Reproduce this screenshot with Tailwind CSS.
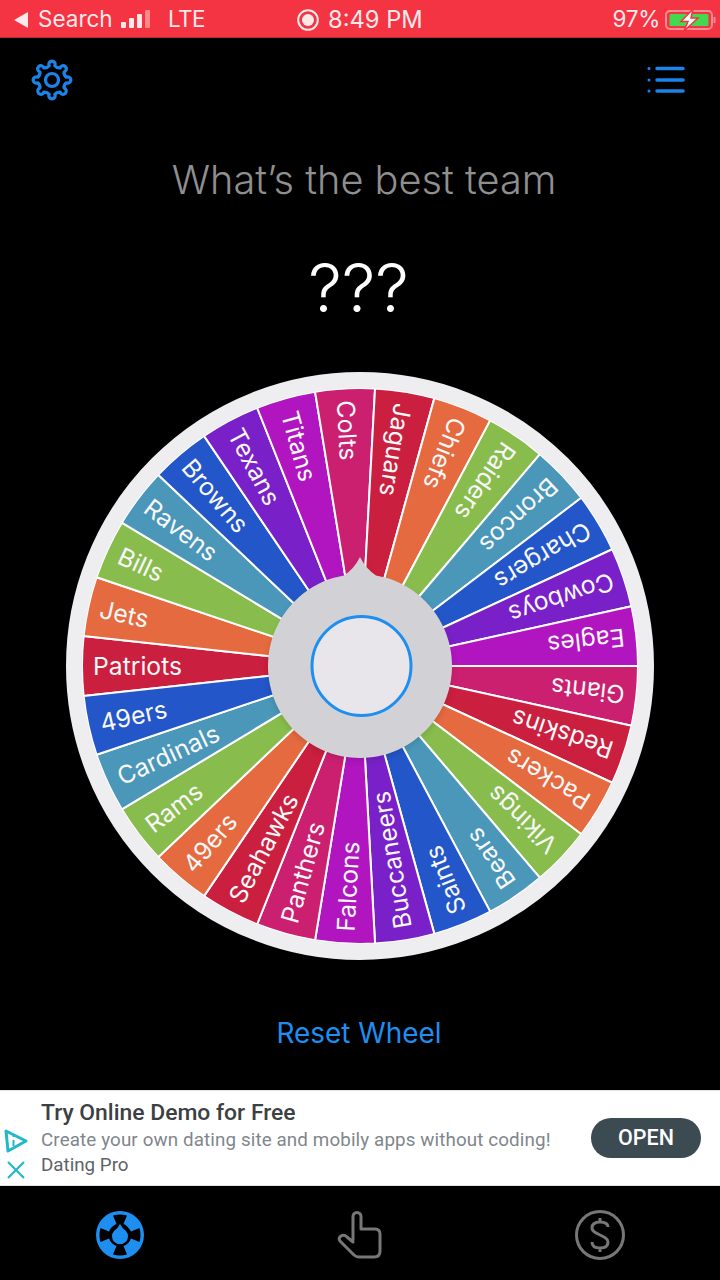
<!DOCTYPE html>
<html>
<head>
<meta charset="utf-8">
<script src="https://cdn.jsdelivr.net/npm/@tailwindcss/browser@4"></script>
</head>
<body class="bg-black">
<div class="w-[720px] h-[1280px] bg-black flex flex-col overflow-hidden font-['Inter',sans-serif]">

  <!-- status bar -->
  <div class="h-[38px] shrink-0 bg-[#f43343] border-b border-[#b92a38] relative flex items-center justify-between pt-[2px] text-[#fde9ea] text-[22.500px] leading-none">
    <div class="flex items-center pl-[14px]">
      <svg width="15" height="16" viewBox="0 0 15 16"><path d="M14 0V16L0 8Z" fill="#fde9ea"/></svg>
      <span class="ml-[9px] w-[83px]">Search</span>
      <svg width="30" height="20" viewBox="0 0 30 20"><rect x="0" y="12" width="5" height="6" rx="1" fill="#fde9ea"/><rect x="8" y="8" width="5" height="10" rx="1" fill="#fde9ea"/><rect x="16" y="4" width="5" height="14" rx="1" fill="#fde9ea"/><rect x="24" y="0" width="5" height="18" rx="1" fill="#f88"/></svg>
      <span class="ml-[17px] tracking-[-0.6px]">LTE</span>
    </div>
    <div class="absolute left-[297px] top-[8px] flex items-center gap-[9px]">
      <svg width="22" height="22" viewBox="0 0 22 22"><circle cx="11" cy="11" r="9.800" fill="none" stroke="#fde9ea" stroke-width="2"/><circle cx="11" cy="11" r="6" fill="#fde9ea"/></svg>
      <span class="text-[23.700px]">8:49 PM</span>
    </div>
    <div class="flex items-center pr-[3px]">
      <span class="tracking-[-0.3px]">97%</span>
      <svg class="ml-[5px]" width="52" height="22" viewBox="0 0 52 22">
        <rect x="1" y="2" width="46" height="18" rx="4" fill="none" stroke="#f98a92" stroke-width="2"/>
        <rect x="4.500" y="5" width="39" height="12" rx="1.500" fill="#43d84f"/>
        <path d="M49.500 8v6" stroke="#f98a92" stroke-width="2"/>
        <path d="M28 0L16 12.500H23L19 22L33 9H26Z" fill="#fff" stroke="#f43343" stroke-width="1.500"/>
      </svg>
    </div>
  </div>

  <!-- top icons -->
  <div class="h-[84px] shrink-0 flex items-center justify-between pl-[30px] pr-[34px]">
    <svg width="44" height="44" viewBox="-22 -22 44 44" fill="none" stroke="#1a84ea" stroke-width="3.200" stroke-linejoin="round">
      <path d="M14.220 -2.830A3.200 3.200 0 1 1 14.220 2.830A6 6 0 0 0 12.060 8.060A3.200 3.200 0 1 1 8.060 12.060A6 6 0 0 0 2.830 14.220A3.200 3.200 0 1 1 -2.830 14.220A6 6 0 0 0 -8.060 12.060A3.200 3.200 0 1 1 -12.060 8.060A6 6 0 0 0 -14.220 2.830A3.200 3.200 0 1 1 -14.220 -2.830A6 6 0 0 0 -12.060 -8.060A3.200 3.200 0 1 1 -8.060 -12.060A6 6 0 0 0 -2.830 -14.220A3.200 3.200 0 1 1 2.830 -14.220A6 6 0 0 0 8.060 -12.060A3.200 3.200 0 1 1 12.060 -8.060A6 6 0 0 0 14.220 -2.830Z"/>
      <circle r="6.500"/>
    </svg>
    <svg width="40" height="30" viewBox="0 0 40 30" stroke="#1a84ea" stroke-linecap="round">
      <path d="M11 3.500H37M11 15H37M11 26H37" stroke-width="3.500"/>
      <circle cx="3" cy="3.500" r="1.500" fill="#1a84ea" stroke="none"/><circle cx="3" cy="15" r="1.500" fill="#1a84ea" stroke="none"/><circle cx="3" cy="26" r="1.500" fill="#1a84ea" stroke="none"/>
    </svg>
  </div>

  <!-- question -->
  <div class="h-[116px] shrink-0 flex items-center justify-center pl-[8px] pt-[2px] text-[39.700px] font-light leading-none text-[#8f8f8f]">What’s the best team</div>
  <div class="h-[98px] shrink-0 flex items-center justify-center text-[67px] font-light leading-none text-white pr-[3px]">???</div>

  <!-- wheel -->
  <div class="h-[624px] shrink-0 pt-[36px]">
    <svg class="block mx-auto font-['Inter',sans-serif]" width="588" height="588" viewBox="-294 -294 588 588" font-size="24.700" fill="#f8f8f8">
      <g stroke="#fff" stroke-width="2" stroke-linejoin="round">
        <path transform="rotate(0)" fill="#cb1f3f" d="M0 0L-276.370 -30.060A278 278 0 0 0 -276.370 30.060Z"/>
        <path transform="rotate(12.414)" fill="#e66a40" d="M0 0L-276.370 -30.060A278 278 0 0 0 -276.370 30.060Z"/>
        <path transform="rotate(24.828)" fill="#88bd4e" d="M0 0L-276.370 -30.060A278 278 0 0 0 -276.370 30.060Z"/>
        <path transform="rotate(37.241)" fill="#4a97b9" d="M0 0L-276.370 -30.060A278 278 0 0 0 -276.370 30.060Z"/>
        <path transform="rotate(49.655)" fill="#2356c8" d="M0 0L-276.370 -30.060A278 278 0 0 0 -276.370 30.060Z"/>
        <path transform="rotate(62.069)" fill="#7a20c8" d="M0 0L-276.370 -30.060A278 278 0 0 0 -276.370 30.060Z"/>
        <path transform="rotate(74.483)" fill="#b015c0" d="M0 0L-276.370 -30.060A278 278 0 0 0 -276.370 30.060Z"/>
        <path transform="rotate(86.897)" fill="#cb1f70" d="M0 0L-276.370 -30.060A278 278 0 0 0 -276.370 30.060Z"/>
        <path transform="rotate(99.310)" fill="#cb1f3f" d="M0 0L-276.370 -30.060A278 278 0 0 0 -276.370 30.060Z"/>
        <path transform="rotate(111.724)" fill="#e66a40" d="M0 0L-276.370 -30.060A278 278 0 0 0 -276.370 30.060Z"/>
        <path transform="rotate(124.138)" fill="#88bd4e" d="M0 0L-276.370 -30.060A278 278 0 0 0 -276.370 30.060Z"/>
        <path transform="rotate(136.552)" fill="#4a97b9" d="M0 0L-276.370 -30.060A278 278 0 0 0 -276.370 30.060Z"/>
        <path transform="rotate(148.966)" fill="#2356c8" d="M0 0L-276.370 -30.060A278 278 0 0 0 -276.370 30.060Z"/>
        <path transform="rotate(161.379)" fill="#7a20c8" d="M0 0L-276.370 -30.060A278 278 0 0 0 -276.370 30.060Z"/>
        <path transform="rotate(173.793)" fill="#b015c0" d="M0 0L-276.370 -30.060A278 278 0 0 0 -276.370 30.060Z"/>
        <path transform="rotate(186.207)" fill="#cb1f70" d="M0 0L-276.370 -30.060A278 278 0 0 0 -276.370 30.060Z"/>
        <path transform="rotate(198.621)" fill="#cb1f3f" d="M0 0L-276.370 -30.060A278 278 0 0 0 -276.370 30.060Z"/>
        <path transform="rotate(211.034)" fill="#e66a40" d="M0 0L-276.370 -30.060A278 278 0 0 0 -276.370 30.060Z"/>
        <path transform="rotate(223.448)" fill="#88bd4e" d="M0 0L-276.370 -30.060A278 278 0 0 0 -276.370 30.060Z"/>
        <path transform="rotate(235.862)" fill="#4a97b9" d="M0 0L-276.370 -30.060A278 278 0 0 0 -276.370 30.060Z"/>
        <path transform="rotate(248.276)" fill="#2356c8" d="M0 0L-276.370 -30.060A278 278 0 0 0 -276.370 30.060Z"/>
        <path transform="rotate(260.690)" fill="#7a20c8" d="M0 0L-276.370 -30.060A278 278 0 0 0 -276.370 30.060Z"/>
        <path transform="rotate(273.103)" fill="#b015c0" d="M0 0L-276.370 -30.060A278 278 0 0 0 -276.370 30.060Z"/>
        <path transform="rotate(285.517)" fill="#cb1f70" d="M0 0L-276.370 -30.060A278 278 0 0 0 -276.370 30.060Z"/>
        <path transform="rotate(297.931)" fill="#cb1f3f" d="M0 0L-276.370 -30.060A278 278 0 0 0 -276.370 30.060Z"/>
        <path transform="rotate(310.345)" fill="#e66a40" d="M0 0L-276.370 -30.060A278 278 0 0 0 -276.370 30.060Z"/>
        <path transform="rotate(322.759)" fill="#88bd4e" d="M0 0L-276.370 -30.060A278 278 0 0 0 -276.370 30.060Z"/>
        <path transform="rotate(335.172)" fill="#4a97b9" d="M0 0L-276.370 -30.060A278 278 0 0 0 -276.370 30.060Z"/>
        <path transform="rotate(347.586)" fill="#2356c8" d="M0 0L-276.370 -30.060A278 278 0 0 0 -276.370 30.060Z"/>
      </g>
      <circle r="286" fill="none" stroke="#eeeef0" stroke-width="16"/>
      <g>
        <text transform="rotate(0)" x="-267" dy=".36em">Patriots</text>
        <text transform="rotate(12.414)" x="-266" dy=".36em">Jets</text>
        <text transform="rotate(24.828)" x="-265" dy=".36em">Bills</text>
        <text transform="rotate(37.241)" x="-267" dy=".36em">Ravens</text>
        <text transform="rotate(49.655)" x="-267" dy=".36em">Browns</text>
        <text transform="rotate(62.069)" x="-267" dy=".36em">Texans</text>
        <text transform="rotate(74.483)" x="-264" dy=".36em">Titans</text>
        <text transform="rotate(86.897)" x="-266" dy=".36em">Colts</text>
        <text transform="rotate(99.310)" x="-266" dy=".36em">Jaguars</text>
        <text transform="rotate(111.724)" x="-266" dy=".36em">Chiefs</text>
        <text transform="rotate(124.138)" x="-267" dy=".36em">Raiders</text>
        <text transform="rotate(136.552)" x="-267" dy=".36em">Broncos</text>
        <text transform="rotate(148.966)" x="-267" dy=".36em">Chargers</text>
        <text transform="rotate(161.379)" x="-267" dy=".36em">Cowboys</text>
        <text transform="rotate(173.793)" x="-266" dy=".36em">Eagles</text>
        <text transform="rotate(186.207)" x="-266" dy=".36em">Giants</text>
        <text transform="rotate(198.621)" x="-266" dy=".36em">Redskins</text>
        <text transform="rotate(211.034)" x="-266" dy=".36em">Packers</text>
        <text transform="rotate(223.448)" x="-266" dy=".36em">Vikings</text>
        <text transform="rotate(235.862)" x="-266" dy=".36em">Bears</text>
        <text transform="rotate(248.276)" x="-266" dy=".36em">Saints</text>
        <text transform="rotate(260.690)" x="-266" dy=".36em">Buccaneers</text>
        <text transform="rotate(273.103)" x="-266" dy=".36em">Falcons</text>
        <text transform="rotate(285.517)" x="-266" dy=".36em">Panthers</text>
        <text transform="rotate(297.931)" x="-266" dy=".36em">Seahawks</text>
        <text transform="rotate(310.345)" x="-266" dy=".36em">49ers</text>
        <text transform="rotate(322.759)" x="-266" dy=".36em">Rams</text>
        <text transform="rotate(335.172)" x="-266" dy=".36em">Cardinals</text>
        <text transform="rotate(347.586)" x="-266" dy=".36em">49ers</text>
      </g>
      <g class="drop-shadow-md">
        <path fill="#d2d1d5" d="M-16 -90.600Q-6 -97 0 -109Q6 -97 16 -90.600A92 92 0 1 1 -16 -90.600Z"/>
      </g>
      <circle cx="1.500" r="49.500" fill="#e8e6ea" stroke="#1e8ff0" stroke-width="3"/>
    </svg>
  </div>

  <!-- reset -->
  <div class="h-[130px] shrink-0 flex items-center justify-center pr-[2px] pt-[18px] text-[27.900px] leading-none text-[#1d8ff2]">Reset Wheel</div>

  <!-- ad -->
  <div class="h-[96px] shrink-0 bg-white border-y border-[#e2e2e2] flex items-center font-['Roboto',sans-serif] relative">
    <div class="w-[41px] shrink-0 h-full flex flex-col items-center pt-[38px] pr-[9px] gap-[8px]">
      <svg width="24" height="24" viewBox="0 0 24 24" fill="none" stroke="#22b8c8" stroke-width="3" stroke-linejoin="round"><path d="M2 2L22 12L4 22Z"/><path d="M9.500 11V17M9.500 6.500V8" stroke-width="2"/></svg>
      <svg width="20" height="18" viewBox="0 0 20 18" fill="none" stroke="#22b8c8" stroke-width="2.200"><path d="M2 1L18 17M18 1L2 17"/></svg>
    </div>
    <div class="flex-1 flex flex-col">
      <div class="text-[22.900px] leading-[26px] font-medium text-[#3c4043] h-[28px] pt-[1px]">Try Online Demo for Free</div>
      <div class="text-[18.800px] leading-[26px] text-[#80868b] tracking-[0.12px]">Create your own dating site and mobily apps without coding!</div>
      <div class="text-[18.800px] leading-[24px] text-[#5f6368]">Dating Pro</div>
    </div>
    <div class="w-[110px] h-[40px] mr-[19px] rounded-full bg-[#3c4a52] text-white text-[21.500px] font-medium flex items-center justify-center">OPEN</div>
  </div>

  <!-- tab bar -->
  <div class="flex-1 grid grid-cols-3 items-center pt-[3px]">
    <div class="flex justify-center">
      <svg width="50" height="50" viewBox="-25 -25 50 50">
        <circle r="24" fill="#1e8ff0"/>
        <path fill="#000" d="M-7 -19.500Q0 -21.500 7 -19.500L3.500 -11Q7 -10 11 -3.500L19.500 -7Q21.500 0 19.500 7L11 3.500Q9 9 3.500 11L7 19.500Q0 21.500 -7 19.500L-3.500 11Q-9 9 -11 3.500L-19.500 7Q-21.500 0 -19.500 -7L-11 -3.500Q-9 -9 -3.500 -11Z"/>
        <path fill="#1e8ff0" d="M0 -11Q2 -7 6 -4A8 8 0 1 1 -6 -4Q-2 -7 0 -11Z"/>
      </svg>
    </div>
    <div class="flex justify-center">
      <svg width="46" height="50" viewBox="0 0 46 50" fill="none" stroke="#777" stroke-width="3" stroke-linejoin="round" stroke-linecap="round">
        <path d="M16 30V6.500A4 4 0 0 1 24 6.500V19H38Q43 19 43 24V41Q43 47 37 47H22Q19 47 17 45L3 31Q1 28 4 26Q7 24 10 27L16 32"/>
      </svg>
    </div>
    <div class="flex justify-center">
      <svg width="50" height="50" viewBox="-25 -25 50 50" fill="none" stroke="#777">
        <circle r="23.500" stroke-width="3"/>
        <path d="M8 -8C8 -12 4 -13 0 -13C-5 -13 -8 -11 -8 -7C-8 0 8 0 8 7C8 11 5 13 0 13C-5 13 -8 11 -8 7M0 -17V-13M0 13V17" stroke-width="3"/>
      </svg>
    </div>
  </div>
</div>
</body>
</html>
